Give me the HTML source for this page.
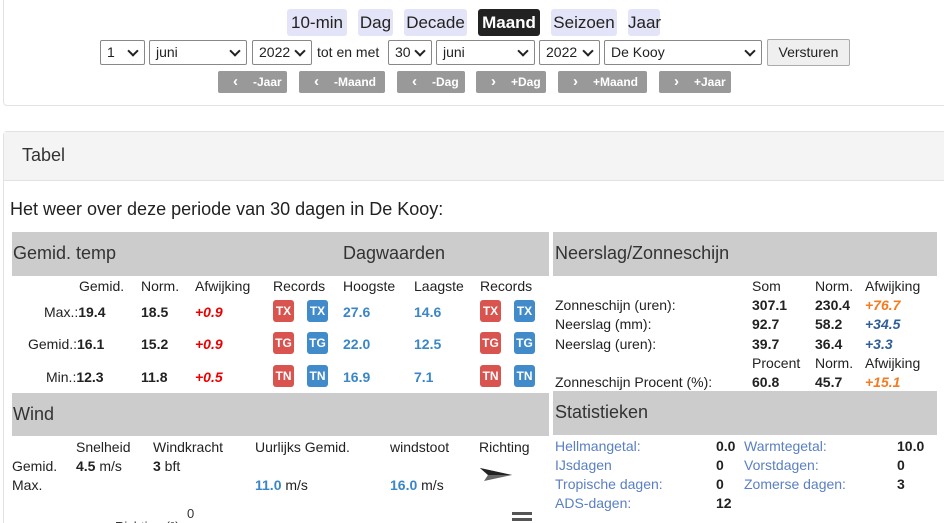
<!DOCTYPE html>
<html style="height:523px;overflow:hidden"><head><meta charset="utf-8"><style>
*{margin:0;padding:0;box-sizing:border-box}
body{width:944px;height:523px;overflow:hidden;background:#fff;font-family:"Liberation Sans",sans-serif;color:#222;position:relative;font-size:14px}
.a{position:absolute;white-space:nowrap}
.card1{position:absolute;left:3px;top:-5px;width:941px;height:111px;border:1px solid #e2e2e2;border-right:none;border-radius:4px 0 0 4px;background:#fff}
.tab{position:absolute;top:9px;height:27px;background:#e4e4f8;border-radius:3px;font-size:17px;line-height:27px;text-align:center;color:#222}
.sel{position:absolute;top:40px;height:25px;border:1px solid #888;border-radius:2px;background:#fff;font-size:14px;line-height:23px;padding-left:6px}
.sel:after{content:"";position:absolute;right:7px;top:6px;width:6px;height:6px;border-right:2px solid #222;border-bottom:2px solid #222;transform:rotate(45deg)}
.nb{position:absolute;top:71px;height:22px;background:#999;border-radius:2px;color:#fff;font-size:12px;font-weight:bold;line-height:22px}
.nb i{font-style:normal;font-size:15px}
.card2{position:absolute;left:3px;top:131px;width:941px;height:392px;border:1px solid #e2e2e2;border-right:none;border-bottom:none;border-radius:4px 0 0 0}
.gh{position:absolute;background:#ccc;font-size:18px;color:#333}
.b{font-weight:bold}
.blue{color:#3a86c6;font-weight:bold}
.red{color:#e00;font-weight:bold;font-style:italic}
.or{color:#f47b20;font-weight:bold;font-style:italic}
.bl2{color:#2f5e99;font-weight:bold;font-style:italic}
.badge{position:absolute;width:21px;height:22px;border-radius:3px;color:#fff;font-weight:bold;font-size:12px;line-height:22px;text-align:center}
.r{background:#d9534f}.u{background:#428bca}
.lk{color:#5a7fc4}
</style></head><body>
<div class="card1"></div>
<div class="tab" style="left:287px;width:60px">10-min</div>
<div class="tab" style="left:358px;width:35px">Dag</div>
<div class="tab" style="left:404px;width:63px">Decade</div>
<div class="tab" style="left:478px;width:62px;background:#222;color:#fff;font-weight:bold">Maand</div>
<div class="tab" style="left:551px;width:66px">Seizoen</div>
<div class="tab" style="left:628px;width:32px">Jaar</div>

<div class="sel" style="left:100px;width:45px">1</div>
<div class="sel" style="left:149px;width:98px">juni</div>
<div class="sel" style="left:252px;width:60px">2022</div>
<div class="a" style="left:317px;top:44px;font-size:14px">tot en met</div>
<div class="sel" style="left:388px;width:44px">30</div>
<div class="sel" style="left:436px;width:99px">juni</div>
<div class="sel" style="left:539px;width:61px">2022</div>
<div class="sel" style="left:604px;width:158px">De Kooy</div>
<div class="a" style="left:767px;top:39px;width:83px;height:27px;border:1px solid #aaa;border-radius:2px;background:#efefef;text-align:center;line-height:25px;font-size:14px">Versturen</div>

<div class="nb" style="left:218px;width:69px"><i style="margin-left:15px">‹</i><span style="margin-left:15px">-Jaar</span></div>
<div class="nb" style="left:299px;width:86px"><i style="margin-left:15px">‹</i><span style="margin-left:15px">-Maand</span></div>
<div class="nb" style="left:397px;width:68px"><i style="margin-left:15px">‹</i><span style="margin-left:15px">-Dag</span></div>
<div class="nb" style="left:476px;width:70px"><i style="margin-left:15px">›</i><span style="margin-left:15px">+Dag</span></div>
<div class="nb" style="left:558px;width:89px"><i style="margin-left:15px">›</i><span style="margin-left:15px">+Maand</span></div>
<div class="nb" style="left:659px;width:72px"><i style="margin-left:15px">›</i><span style="margin-left:15px">+Jaar</span></div>

<div class="card2"></div>
<div class="a" style="left:4px;top:132px;width:940px;height:49px;background:#f4f4f4;border-bottom:1px solid #e2e2e2"></div>
<div class="a" style="left:22px;top:145px;font-size:18px;color:#333">Tabel</div>
<div class="a" style="left:10px;top:199px;font-size:18px;color:#222">Het weer over deze periode van 30 dagen in De Kooy:</div>

<div class="gh" style="left:12px;top:232px;width:537px;height:44px"><span class="a" style="left:1px;top:11px">Gemid. temp</span><span class="a" style="left:331px;top:11px">Dagwaarden</span></div>
<div class="gh" style="left:553px;top:232px;width:384px;height:44px"><span class="a" style="left:2px;top:11px">Neerslag/Zonneschijn</span></div>

<div class="a" style="left:79px;top:278px">Gemid.</div>
<div class="a" style="left:141px;top:278px">Norm.</div>
<div class="a" style="left:195px;top:278px">Afwijking</div>
<div class="a" style="left:273px;top:278px">Records</div>
<div class="a" style="left:343px;top:278px">Hoogste</div>
<div class="a" style="left:414px;top:278px">Laagste</div>
<div class="a" style="left:480px;top:278px">Records</div>

<div class="a" style="left:44px;top:304px">Max.:<span class="b">19.4</span></div>
<div class="a b" style="left:141px;top:304px">18.5</div>
<div class="a red" style="left:195px;top:304px">+0.9</div>
<div class="a" style="left:28px;top:336px">Gemid.:<span class="b">16.1</span></div>
<div class="a b" style="left:141px;top:336px">15.2</div>
<div class="a red" style="left:195px;top:336px">+0.9</div>
<div class="a" style="left:46px;top:369px">Min.:<span class="b">12.3</span></div>
<div class="a b" style="left:141px;top:369px">11.8</div>
<div class="a red" style="left:195px;top:369px">+0.5</div>

<div class="badge r" style="left:273px;top:300px">TX</div><div class="badge u" style="left:307px;top:300px">TX</div>
<div class="badge r" style="left:273px;top:332px">TG</div><div class="badge u" style="left:307px;top:332px">TG</div>
<div class="badge r" style="left:273px;top:365px">TN</div><div class="badge u" style="left:307px;top:365px">TN</div>
<div class="badge r" style="left:480px;top:300px">TX</div><div class="badge u" style="left:514px;top:300px">TX</div>
<div class="badge r" style="left:480px;top:332px">TG</div><div class="badge u" style="left:514px;top:332px">TG</div>
<div class="badge r" style="left:480px;top:365px">TN</div><div class="badge u" style="left:514px;top:365px">TN</div>
<div class="a blue" style="left:343px;top:304px">27.6</div><div class="a blue" style="left:414px;top:304px">14.6</div>
<div class="a blue" style="left:343px;top:336px">22.0</div><div class="a blue" style="left:414px;top:336px">12.5</div>
<div class="a blue" style="left:343px;top:369px">16.9</div><div class="a blue" style="left:414px;top:369px">7.1</div>

<div class="a" style="left:752px;top:278px">Som</div>
<div class="a" style="left:815px;top:278px">Norm.</div>
<div class="a" style="left:865px;top:278px">Afwijking</div>
<div class="a" style="left:555px;top:297px">Zonneschijn (uren):</div>
<div class="a b" style="left:752px;top:297px">307.1</div><div class="a b" style="left:815px;top:297px">230.4</div><div class="a or" style="left:865px;top:297px">+76.7</div>
<div class="a" style="left:555px;top:316px">Neerslag (mm):</div>
<div class="a b" style="left:752px;top:316px">92.7</div><div class="a b" style="left:815px;top:316px">58.2</div><div class="a bl2" style="left:865px;top:316px">+34.5</div>
<div class="a" style="left:555px;top:336px">Neerslag (uren):</div>
<div class="a b" style="left:752px;top:336px">39.7</div><div class="a b" style="left:815px;top:336px">36.4</div><div class="a bl2" style="left:865px;top:336px">+3.3</div>
<div class="a" style="left:752px;top:355px">Procent</div><div class="a" style="left:815px;top:355px">Norm.</div><div class="a" style="left:865px;top:355px">Afwijking</div>
<div class="a" style="left:555px;top:374px">Zonneschijn Procent (%):</div>
<div class="a b" style="left:752px;top:374px">60.8</div><div class="a b" style="left:815px;top:374px">45.7</div><div class="a or" style="left:865px;top:374px">+15.1</div>

<div class="gh" style="left:12px;top:393px;width:537px;height:43px"><span class="a" style="left:1px;top:11px">Wind</span></div>
<div class="gh" style="left:553px;top:391px;width:384px;height:44px"><span class="a" style="left:2px;top:11px">Statistieken</span></div>

<div class="a" style="left:76px;top:439px">Snelheid</div>
<div class="a" style="left:153px;top:439px">Windkracht</div>
<div class="a" style="left:255px;top:439px">Uurlijks Gemid.</div>
<div class="a" style="left:390px;top:439px">windstoot</div>
<div class="a" style="left:479px;top:439px">Richting</div>
<div class="a" style="left:12px;top:458px">Gemid.</div>
<div class="a" style="left:76px;top:458px"><span class="b">4.5</span> m/s</div>
<div class="a" style="left:153px;top:458px"><span class="b">3</span> bft</div>
<div class="a" style="left:12px;top:477px">Max.</div>
<div class="a" style="left:255px;top:477px"><span class="blue">11.0</span> m/s</div>
<div class="a" style="left:390px;top:477px"><span class="blue">16.0</span> m/s</div>
<svg class="a" style="left:478px;top:466px" width="36" height="16"><path d="M2 2 L34 9 L6 15 L10 9 Z" fill="#666"/><path d="M2 2 L34 9 L10 9 Z" fill="#222"/></svg>
<div class="a" style="left:187px;top:506px;font-size:13px;color:#333">0</div>
<div class="a" style="left:115px;top:519px;font-size:13px;color:#333">Richting (°)</div>
<div class="a" style="left:512px;top:512px;width:20px;height:3px;background:#555"></div>
<div class="a" style="left:512px;top:518px;width:20px;height:3px;background:#555"></div>

<div class="a lk" style="left:555px;top:438px">Hellmangetal:</div><div class="a b" style="left:716px;top:438px">0.0</div>
<div class="a lk" style="left:744px;top:438px">Warmtegetal:</div><div class="a b" style="left:897px;top:438px">10.0</div>
<div class="a lk" style="left:555px;top:457px">IJsdagen</div><div class="a b" style="left:716px;top:457px">0</div>
<div class="a lk" style="left:744px;top:457px">Vorstdagen:</div><div class="a b" style="left:897px;top:457px">0</div>
<div class="a lk" style="left:555px;top:476px">Tropische dagen:</div><div class="a b" style="left:716px;top:476px">0</div>
<div class="a lk" style="left:744px;top:476px">Zomerse dagen:</div><div class="a b" style="left:897px;top:476px">3</div>
<div class="a lk" style="left:555px;top:495px">ADS-dagen:</div><div class="a b" style="left:716px;top:495px">12</div>
</body></html>
